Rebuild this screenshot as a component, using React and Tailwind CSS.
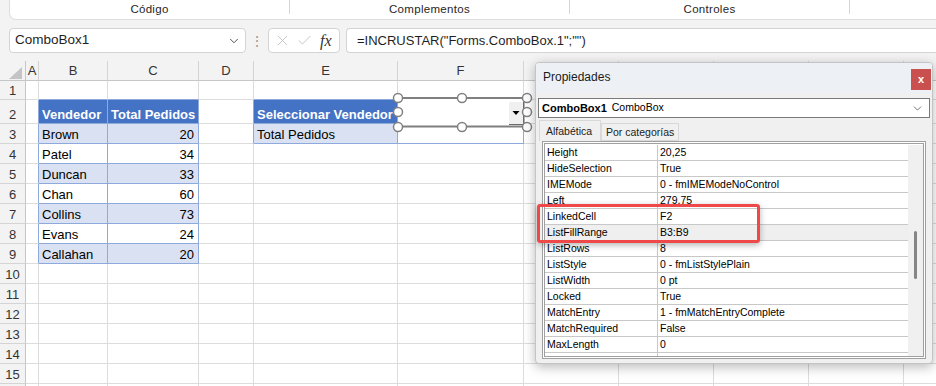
import { ChevronDown, X, Check } from "lucide-react";

const colW = ["w-[13px]", "w-[69px]", "w-[91px]", "w-[55px]", "w-[144px]", "w-[126px]", "w-[95px]", "w-[95px]", "w-[95px]", "w-[95px]", "w-[95px]"];
const letters = ["A", "B", "C", "D", "E", "F", "G", "H", "I", "J", "K"];
const rows = [1, 2, 3, 4, 5, 6, 7, 8, 9, 10, 11, 12, 13, 14, 15, 16];

const names = ["Brown", "Patel", "Duncan", "Chan", "Collins", "Evans", "Callahan"];
const totals = [20, 34, 33, 60, 73, 24, 20];

const props = [
  ["Height", "20,25"],
  ["HideSelection", "True"],
  ["IMEMode", "0 - fmIMEModeNoControl"],
  ["Left", "279,75"],
  ["LinkedCell", "F2"],
  ["ListFillRange", "B3:B9"],
  ["ListRows", "8"],
  ["ListStyle", "0 - fmListStylePlain"],
  ["ListWidth", "0 pt"],
  ["Locked", "True"],
  ["MatchEntry", "1 - fmMatchEntryComplete"],
  ["MatchRequired", "False"],
  ["MaxLength", "0"],
  ["MouseIcon", "(Ninguno)"],
];

function inTable(r, c) {
  if (r >= 2 && r <= 9 && (c === 1 || c === 2)) return true;
  if ((r === 2 || r === 3) && (c === 4 || c === 5)) return true;
  return false;
}

function rowH(r) {
  if (r === 1) return "h-[19px]";
  if (r === 2) return "h-[24px]";
  return "h-[20px]";
}

function cellContent(r, c) {
  if (r === 2 && c === 1) return { text: "Vendedor" };
  if (r === 2 && c === 2) return { text: "Total Pedidos" };
  if (r === 2 && c === 4) return { text: "Seleccionar Vendedor" };
  if (r === 3 && c === 4) return { text: "Total Pedidos" };
  if (r >= 3 && r <= 9 && c === 1) return { text: names[r - 3] };
  if (r >= 3 && r <= 9 && c === 2) return { text: totals[r - 3], right: true };
  return { text: "" };
}

function Cell({ r, c }) {
  const t = inTable(r, c);
  const rb = t || inTable(r, c + 1) ? "border-r-[#8ea9db]" : "border-r-[#dcdcdc]";
  const bb = t || inTable(r + 1, c) ? "border-b-[#8ea9db]" : "border-b-[#dcdcdc]";
  let bg = "bg-white text-black";
  if (t && r === 2) bg = "bg-[#4472c4] text-white font-bold";
  else if (t && (c === 1 || c === 2) && r % 2 === 1) bg = "bg-[#d9e1f2] text-black";
  else if (r === 3 && c === 4) bg = "bg-[#d9e1f2] text-black";
  const { text, right } = cellContent(r, c);
  return (
    <div
      className={`${colW[c]} shrink-0 h-full border-r border-b ${rb} ${bb} ${bg} flex items-end overflow-hidden whitespace-nowrap text-[13px] leading-[17px] ${right ? "justify-end pr-[4px]" : "pl-[3px]"}`}
    >
      {text}
    </div>
  );
}

function Handles() {
  const pts = [
    [6, 6], [70, 6], [135, 6],
    [6, 20], [135, 20],
    [6, 35], [70, 35], [135, 35],
  ];
  return (
    <svg width="142" height="42" viewBox="0 0 142 42" className="absolute left-[392px] top-[92px]">
      <rect x="6" y="7" width="126" height="27" fill="white" />
      <line x1="6" y1="6" x2="135" y2="6" stroke="#7f7f7f" strokeWidth="2" />
      <line x1="6" y1="34.5" x2="135" y2="34.5" stroke="#7f7f7f" strokeWidth="2" />
      <line x1="132" y1="8" x2="132" y2="33" stroke="#6b6b6b" strokeWidth="1" />
      <rect x="116.5" y="9.5" width="15" height="23" fill="#f0f0f0" stroke="#ffffff" strokeWidth="1" />
      <line x1="117" y1="32.5" x2="132" y2="32.5" stroke="#6b6b6b" strokeWidth="1" />
      <line x1="131.5" y1="10" x2="131.5" y2="33" stroke="#6b6b6b" strokeWidth="1" />
      <polygon points="120.5,19 127.5,19 124,23" fill="#000" />
      {pts.map(([x, y], i) => (
        <circle key={i} cx={x} cy={y} r="4.5" fill="white" stroke="#808080" strokeWidth="1.5" />
      ))}
    </svg>
  );
}

function PropertiesPanel() {
  return (
    <div className="absolute left-[535px] top-[62px] w-[398px] h-[302px] flex flex-col border border-[#c4c4c4] rounded-[4px] overflow-hidden bg-[#f0f0f0] shadow-[0_3px_12px_rgba(0,0,0,0.28)]">
      <div className="h-[30px] shrink-0 bg-[#edf1f6] flex items-start justify-between pl-[7px] pr-[1px]">
        <span className="text-[12px] leading-[29px] text-[#1a1a1a]">Propiedades</span>
        <div className="mt-[6px] w-[20px] h-[21px] bg-[#c9504e] text-white text-[11px] font-bold flex items-center justify-center">x</div>
      </div>
      <div className="flex-1 flex flex-col px-[2px] pt-[5px] min-h-0">
        <div className="h-[20px] shrink-0 bg-white border border-[#7a7a7a] flex items-center pl-[3px] pr-[5px] text-black">
          <span className="text-[11px] font-bold">ComboBox1</span>
          <span className="text-[10.5px] ml-[5px] flex-1">ComboBox</span>
          <ChevronDown size={13} strokeWidth={1.5} className="text-[#555]" />
        </div>
        <div className="h-[22px] shrink-0 flex items-end pl-[1px] mt-[1px]">
          <div className="h-[21px] w-[62px] border border-b-0 border-[#d8d8d8] bg-[#f0f0f0] text-[10.5px] pl-[6px] leading-[20px]">Alfabética</div>
          <div className="h-[18px] w-[78px] border border-[#d8d8d8] bg-[#f0f0f0] text-[10.5px] pl-[4px] leading-[17px]">Por categorías</div>
        </div>
        <div className="flex-1 min-h-0 ml-[4px] mr-[4px] mb-[4px] border border-[#a0a0a0] bg-white p-[1px]">
          <div className="h-full border border-[#a0a0a0] flex pt-[1px]">
            <div className="flex-1 overflow-hidden">
              {props.map(([n, v]) => (
                <div
                  key={n}
                  className={`h-[16px] flex border-b border-[#c8c8c8] text-[10.5px] leading-[15px] text-black ${n === "ListFillRange" ? "bg-[#efefef]" : "bg-white"}`}
                >
                  <div className="w-[113px] shrink-0 border-r border-[#c8c8c8] pl-[2px] whitespace-nowrap overflow-hidden">{n}</div>
                  <div className="pl-[2px] whitespace-nowrap">{v}</div>
                </div>
              ))}
            </div>
            <div className="w-[15px] shrink-0 bg-[#f0f0f0] flex justify-center pt-[86px]">
              <div className="w-[3px] h-[48px] rounded-full bg-[#858585]" />
            </div>
          </div>
        </div>
      </div>
    </div>
  );
}

export default function App() {
  return (
    <div className="relative w-[936px] h-[386px] overflow-hidden bg-[#f3f3f3] font-['Liberation_Sans',Arial,sans-serif] text-[#222]">
      {/* ribbon group labels */}
      <div className="flex h-[20px] pl-[9px]">
        <div className="flex-1 flex bg-white border-b border-l border-[#dedede] rounded-bl-[7px] h-[20px]">
          {["Código", "Complementos", "Controles", ""].map((g, i) => (
            <div key={i} className={`${i < 3 ? "w-[280px]" : "flex-1"} flex items-start`}>
              <div className="flex-1 text-center text-[11.5px] leading-[19px] tracking-[0.3px] text-[#262626]">{g}</div>
              {i < 3 && <div className="w-px h-[14px] bg-[#d6d6d6]" />}
            </div>
          ))}
        </div>
      </div>

      {/* formula bar */}
      <div className="flex items-center h-[25px] mt-[8px] pl-[9px]">
        <div className="w-[237px] h-[25px] bg-white border border-[#d4d4d4] rounded-[4px] flex items-center pl-[5px] pr-[4px]">
          <span className="flex-1 text-[13.5px] text-[#1f1f1f]">ComboBox1</span>
          <ChevronDown size={14} strokeWidth={1.6} className="text-[#444]" />
        </div>
        <div className="w-[22px] text-center text-[#9a9a9a] text-[14px] leading-[14px]">⋮</div>
        <div className="w-[72px] h-[25px] bg-white border border-[#d4d4d4] rounded-[4px] flex items-center pl-[5px] gap-[5px]">
          <X size={17} strokeWidth={1.1} className="text-[#b5b5b5]" />
          <Check size={17} strokeWidth={1.1} className="text-[#b5b5b5]" />
          <span className="font-['Liberation_Serif',serif] italic text-[16px] leading-[16px] text-[#333] ml-[2px]">fx</span>
        </div>
        <div className="flex-1 h-[25px] ml-[6px] bg-white border border-[#d4d4d4] rounded-l-[4px] border-r-0 flex items-center pl-[10px] text-[13px] text-[#1f1f1f]">
          =INCRUSTAR("Forms.ComboBox.1";"")
        </div>
      </div>

      {/* sheet */}
      <div className="mt-[8px] flex flex-col">
        <div className="flex h-[20px]">
          <div className="w-[26px] shrink-0 h-full bg-[#f3f3f3] border-r border-b border-[#c6c6c6] flex items-end justify-end pr-[3px] pb-[1px]">
            <svg width="13" height="12" viewBox="0 0 13 12">
              <polygon points="0,12 13,12 13,0" fill="#c4c4c4" />
            </svg>
          </div>
          {letters.map((l, c) => (
            <div
              key={l}
              className={`${colW[c]} shrink-0 h-full bg-[#f3f3f3] border-r border-b border-r-[#d4d4d4] border-b-[#c6c6c6] flex items-center justify-center text-[13px] text-[#333]`}
            >
              {l}
            </div>
          ))}
        </div>
        {rows.map((r) => (
          <div key={r} className={`flex ${rowH(r)} shrink-0`}>
            <div className="w-[26px] shrink-0 h-full bg-[#f3f3f3] border-r border-b border-r-[#c6c6c6] border-b-[#d4d4d4] flex items-end justify-center text-[13px] leading-[17px] text-[#333]">
              {r}
            </div>
            {letters.map((l, c) => (
              <Cell key={l} r={r} c={c} />
            ))}
          </div>
        ))}
      </div>

      <Handles />
      <PropertiesPanel />

      {/* highlight */}
      <div className="absolute left-[537px] top-[204px] w-[223px] h-[39px] border-[3px] border-[#ee4848] rounded-[3px] shadow-[0_2px_6px_rgba(0,0,0,0.3)]" />
    </div>
  );
}
